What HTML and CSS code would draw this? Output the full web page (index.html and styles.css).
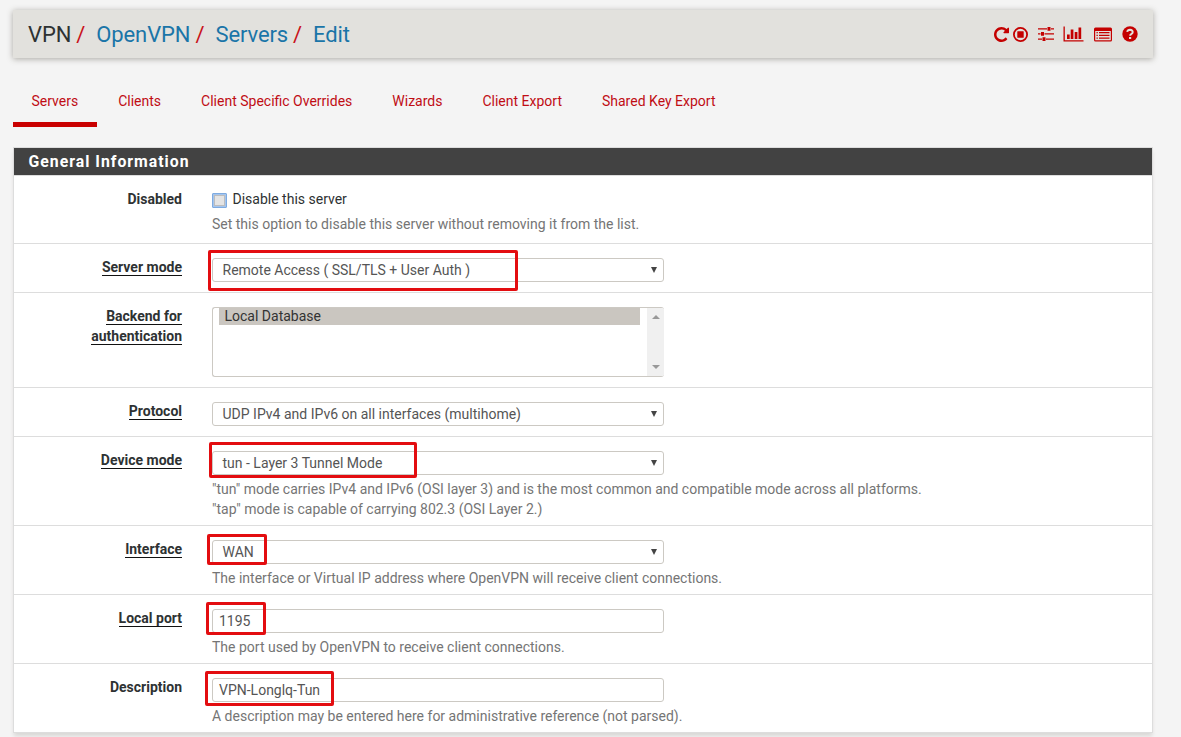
FILE: index.html
```html
<!DOCTYPE html>
<html lang="en">
<head>
<meta charset="utf-8">
<title>VPN: OpenVPN: Servers: Edit</title>
<link rel="stylesheet" href="styles.css">
</head>
<body>
<header class="page-header">
  <nav class="breadcrumb">
    <span class="crumb">VPN</span><span class="slash">/</span><a class="crumb link">OpenVPN</a><span class="slash">/</span><a class="crumb link">Servers</a><span class="slash">/</span><a class="crumb link">Edit</a>
  </nav>
  <div class="actions">
    <svg class="icon restart" viewBox="128 128 1536 1536"><path d="M1664 256v448q0 26-19 45t-45 19h-448q-42 0-59-40-17-39 14-69l138-138q-148-137-349-137-104 0-198.500 40.500t-163.500 109.500-109.500 163.500-40.500 198.500 40.500 198.500 109.500 163.500 163.500 109.500 198.500 40.500q119 0 225-52t179-147q7-10 23-12 15 0 25 9l137 138q9 8 9.500 20.500t-7.500 22.500q-109 132-264 204.500t-327 72.500q-156 0-298-61t-245-164-164-245-61-298 61-298 164-245 245-164 298-61q147 0 284.500 55.500t244.500 156.500l130-129q29-31 70-14 39 17 39 59z"/></svg>
    <svg class="icon stop" viewBox="0 0 15 15"><circle cx="7.500" cy="7.500" r="6.600" fill="none" stroke="currentColor" stroke-width="1.800"/><rect x="4.300" y="4.300" width="6.400" height="6.400" rx=".5"/></svg>
    <svg class="icon sliders" viewBox="0 0 16 16"><path d="M0 2.200h9v1.300H0zM13 2.200h3v1.300h-3zM9.500 1h3v3.700h-3zM0 7.300h2.500v1.300H0zM6.500 7.300H16v1.300H6.500zM3 6.100h3v3.700H3zM0 12.500h4v1.300H0zM8 12.500h8v1.300H8zM4.500 11.300h3V15h-3z" transform="translate(0 0)"/></svg>
    <svg class="icon chart" viewBox="0 0 20 16"><path d="M0 .5h1.300v13.700H20v1.300H0zM3.500 8.500h2.700v4.500H3.500zM7.200 3.500h2.700V13H7.200zM11.200 6h2.700v7h-2.700zM15 1.500h2.700V13H15z"/></svg>
    <svg class="icon list" viewBox="0 0 18 15"><path fill-rule="evenodd" d="M1.500.5h15A1.500 1.500 0 0 1 18 2v11a1.500 1.500 0 0 1-1.500 1.500h-15A1.500 1.500 0 0 1 0 13V2A1.500 1.500 0 0 1 1.500.5zM1.200 4v9q0 .3.300.3h15q.3 0 .3-.3V4z"/><path d="M2.500 5h1.300v1.200H2.500zM5 5h10.500v1.200H5zM2.500 7.800h1.300V9H2.500zM5 7.800h10.500V9H5zM2.500 10.600h1.300v1.200H2.500zM5 10.600h10.500v1.200H5z"/></svg>
    <svg class="icon question" viewBox="0 0 16 16"><circle cx="8" cy="8" r="7.700"/><path class="cut" d="M5.200 5.900Q5.600 3.800 8 3.800q2.600.1 2.700 2.300 0 1.400-1.500 2.100-1 .5-1 1.500"/><path class="dot" d="M7 11h2.200v2H7z"/></svg>
  </div>
</header>

<nav class="tabs">
  <a class="tab active">Servers</a>
  <a class="tab">Clients</a>
  <a class="tab">Client Specific Overrides</a>
  <a class="tab">Wizards</a>
  <a class="tab">Client Export</a>
  <a class="tab">Shared Key Export</a>
</nav>

<section class="panel">
  <h2 class="panel-title">General Information</h2>
  <form class="rows">
    <div class="row">
      <div class="label"><span>Disabled</span></div>
      <div class="field">
        <label class="check"><span class="box"></span>Disable this server</label>
        <p class="help check-help">Set this option to disable this server without removing it from the list.</p>
      </div>
    </div>
    <div class="row">
      <div class="label"><span class="req">Server mode</span></div>
      <div class="field">
        <div class="control select">Remote Access ( SSL/TLS + User Auth )</div>
        <i class="mark mark-mode"></i>
      </div>
    </div>
    <div class="row">
      <div class="label"><span class="req">Backend for authentication</span></div>
      <div class="field">
        <div class="listbox"><div class="options"><div class="option">Local Database</div></div><div class="scroll"><i class="up"></i><i class="down"></i></div></div>
      </div>
    </div>
    <div class="row">
      <div class="label"><span class="req">Protocol</span></div>
      <div class="field"><div class="control select">UDP IPv4 and IPv6 on all interfaces (multihome)</div></div>
    </div>
    <div class="row">
      <div class="label"><span class="req">Device mode</span></div>
      <div class="field">
        <div class="control select">tun - Layer 3 Tunnel Mode</div>
        <p class="help">"tun" mode carries IPv4 and IPv6 (OSI layer 3) and is the most common and compatible mode across all platforms.<br>"tap" mode is capable of carrying 802.3 (OSI Layer 2.)</p>
        <i class="mark mark-device"></i>
      </div>
    </div>
    <div class="row">
      <div class="label"><span class="req">Interface</span></div>
      <div class="field">
        <div class="control select">WAN</div>
        <p class="help">The interface or Virtual IP address where OpenVPN will receive client connections.</p>
        <i class="mark mark-interface"></i>
      </div>
    </div>
    <div class="row">
      <div class="label"><span class="req">Local port</span></div>
      <div class="field">
        <div class="control">1195</div>
        <p class="help">The port used by OpenVPN to receive client connections.</p>
        <i class="mark mark-port"></i>
      </div>
    </div>
    <div class="row">
      <div class="label"><span>Description</span></div>
      <div class="field">
        <div class="control">VPN-Longlq-Tun</div>
        <p class="help">A description may be entered here for administrative reference (not parsed).</p>
        <i class="mark mark-description"></i>
      </div>
    </div>
  </form>
</section>
</body>
</html>
```
FILE: styles.css
```css
* { box-sizing: border-box; }
body {
  margin: 0;
  padding: 10px 28px 0 13px;
  height: 737px;
  overflow: hidden;
  background: #f4f4f4;
  color: #2e3233;
  font: 14px/20px Roboto, "Liberation Sans", sans-serif;
}
.page-header {
  display: flex;
  justify-content: space-between;
  align-items: center;
  height: 48px;
  padding: 0 15px;
  background: #e2e1dd;
  box-shadow: 0 1px 6px rgba(60, 55, 40, .4);
}
.breadcrumb { display: flex; padding-top: 2px; font-size: 22px; line-height: 28px; letter-spacing: -.1px; }
.slash { color: #c9131a; margin: 0 11px 0 5px; }
.link { color: #1a75a8; }
.actions { display: flex; align-items: center; color: #c40000; }
.icon { display: block; height: 16px; fill: currentColor; }
.restart { width: 15px; height: 15px; margin-right: 4px; }
.stop { width: 15px; height: 15px; margin-right: 10px; }
.sliders { width: 16px; margin-right: 9px; }
.chart { width: 21px; margin-right: 10px; }
.list { width: 18px; height: 15px; margin-right: 10px; }
.question { width: 16px; }
.cut { fill: none; stroke: #e2e1dd; stroke-width: 2; }
.dot { fill: #e2e1dd; }

.tabs { display: flex; height: 69px; margin-top: 20px; }
.tab {
  height: 49px;
  padding: 13px 18.5px 0;
  margin-right: 3px;
  color: #c00d14;
}
.tab.active { border-bottom: 5px solid #c90000; }

.panel {
  height: 586px;
  border: 1px solid #ddd;
  background: #fff;
  box-shadow: 0 4px 4px -1px rgba(60, 55, 40, .15);
}
.panel-title {
  margin: 0;
  height: 28px;
  padding: 0 14.5px;
  border-bottom: 1px solid #ddd;
  background: #424242;
  color: #fff;
  font-size: 15.8px;
  font-weight: 700;
  line-height: 27px;
  letter-spacing: 1px;
}
.rows { display: grid; grid-template-rows: 68px 49px 95px 49px 89px 69px 69px 69px; }
.row { display: grid; grid-template-columns: 168px 452px; column-gap: 30px; border-bottom: 1px solid #ddd; }
.row:last-child { border-bottom: 0; }
.label { padding: 13px 0 0 70px; text-align: right; font-weight: 700; }
.req { border-bottom: 1px solid #111; }
.field { position: relative; padding-top: 14px; white-space: nowrap; }
.check { display: flex; align-items: center; height: 20px; margin-top: -1px; }
.box { width: 15px; height: 15px; margin: 2px 5.5px 0 0; border: 1px solid #7eabe0; border-radius: 1px; box-shadow: inset 0 0 0 1px #a5c5ee, inset 0 0 0 2px #bdbdbd; background: #e4e4e4; }
.control {
  position: relative;
  height: 24px;
  padding: 0 6px;
  border: 1px solid #ccc9c3;
  border-radius: 3px;
  color: #555;
  line-height: 23px;
}
.select { padding-left: 9.5px; }
.select::after {
  content: "";
  position: absolute;
  right: 6px;
  top: 8px;
  border: 3.5px solid transparent;
  border-top: 6px solid #444;
  border-bottom: 0;
}
.help { margin: 4px 0 0; color: #757575; }
.help.check-help { margin-top: 5px; }
.listbox { display: flex; height: 70px; border: 1px solid #ccc9c3; border-right: 0; border-radius: 3px; overflow: hidden; }
.options { flex: 1; padding: 0 7px 0 6px; color: #333; }
.option { height: 17px; padding-left: 5.5px; background: #cac6c0; line-height: 17px; }
.scroll { display: flex; flex-direction: column; justify-content: space-between; align-items: center; width: 17px; padding: 7px 0; background: #f0f0f0; }
.up, .down { border: 4px solid transparent; }
.up { border-top: 0; border-bottom-color: #999; }
.down { border-bottom: 0; border-top-color: #999; }
.mark { position: absolute; border: 3px solid #e30d10; border-radius: 2px; }
.mark-mode { left: -4px; top: 6px; width: 310px; height: 41px; }
.mark-device { left: -3px; top: 5px; width: 208px; height: 36px; }
.mark-interface { left: -5px; top: 8px; width: 60px; height: 31px; }
.mark-port { left: -6px; top: 7px; width: 60px; height: 33px; }
.mark-description { left: -7px; top: 7px; width: 129px; height: 35px; }
```
